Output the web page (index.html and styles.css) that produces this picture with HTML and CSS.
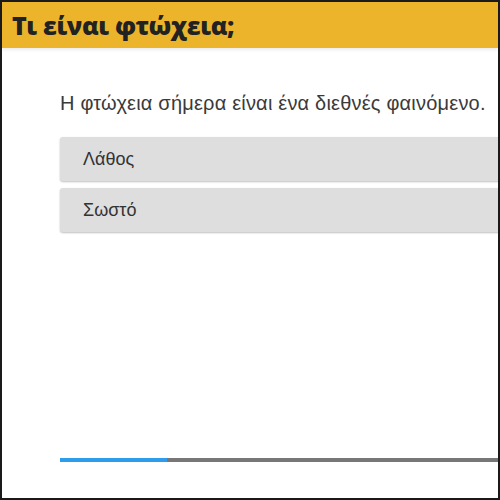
FILE: index.html
```html
<!DOCTYPE html>
<html lang="el">
<head>
<meta charset="utf-8">
<link rel="stylesheet" href="styles.css">
</head>
<body>
<div class="frame">
  <header class="bar">
    <h1 class="title">Τι είναι φτώχεια;</h1>
  </header>
  <main class="content">
    <p class="question">Η φτώχεια σήμερα είναι ένα διεθνές φαινόμενο.</p>
    <div class="answers">
      <div class="answer">Λάθος</div>
      <div class="answer">Σωστό</div>
    </div>
    <div class="spacer"></div>
    <div class="progress"><div class="progress-fill" style="width: 107px"></div></div>
  </main>
</div>
</body>
</html>
```
FILE: styles.css
```css
html, body {
  margin: 0;
  padding: 0;
  background: #fff;
}
.frame {
  width: 500px;
  height: 500px;
  box-sizing: border-box;
  border: 2px solid #1a1a1a;
  display: flex;
  flex-direction: column;
  overflow: hidden;
}
.bar {
  height: 46px;
  background: #ecb42b;
  display: flex;
  align-items: center;
  padding-left: 10px;
  box-shadow: 0 2px 3px rgba(0,0,0,0.08);
}
.title {
  margin: 0;
  font-family: "Open Sans", "Noto Sans", sans-serif;
  font-weight: 800;
  font-size: 25px;
  color: #222;
  letter-spacing: -0.4px;
}
.content {
  flex: 1;
  display: flex;
  flex-direction: column;
  padding-left: 58px;
  padding-bottom: 35px;
}
.question {
  margin: 43px 0 0 0;
  font-family: "Liberation Sans", Arial, sans-serif;
  font-size: 20px;
  line-height: 24px;
  letter-spacing: 0.2px;
  color: #3a3a3a;
  white-space: nowrap;
}
.answers {
  margin-top: 22px;
  display: flex;
  flex-direction: column;
  gap: 7px;
  margin-right: -10px;
}
.answer {
  height: 44px;
  background: #dedede;
  border-radius: 3px;
  box-shadow: 0 1px 2px rgba(0,0,0,0.25);
  display: flex;
  align-items: center;
  padding-left: 23px;
  font-family: "Liberation Sans", Arial, sans-serif;
  font-size: 18px;
  color: #333;
}
.spacer {
  flex: 1;
}
.progress {
  height: 4px;
  background: #777;
  margin-right: -10px;
  margin-bottom: 1px;
}
.progress-fill {
  height: 100%;
  background: #2d9cea;
}
```
